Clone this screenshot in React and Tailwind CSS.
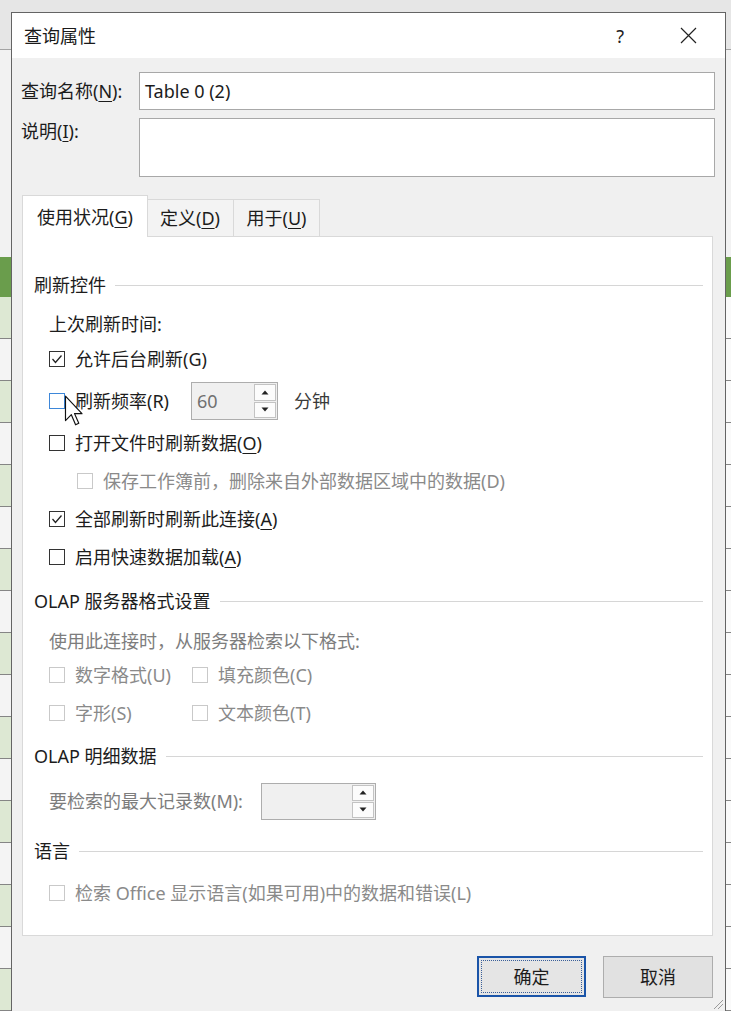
import React from "react";

const FONT = "font-['Noto_Sans','Noto_Sans_CJK_SC',sans-serif]";

// excel sheet peeking out behind the dialog
function SheetStrip({ width, tone }) {
  const rows = Array.from({ length: 17 });
  return (
    <div className={`${width} flex flex-col overflow-hidden`}>
      <div className="h-[52px] bg-[#e6e6e6] border-b border-[#a3a3a3]" />
      <div className="h-[215px] bg-[#f2f2f2]" />
      <div className="h-[42px] bg-[#6a9d4c]" />
      {rows.map((_, i) => (
        <div
          key={i}
          className={`h-[42px] shrink-0 border-b border-[#858585] ${
            tone === "green"
              ? i % 2 === 0
                ? "bg-[#dde8d3]"
                : "bg-[#f4f4f4]"
              : "bg-[#fafafa]"
          }`}
        />
      ))}
    </div>
  );
}

function U({ children }) {
  return <span className="underline underline-offset-[3px] decoration-1">{children}</span>;
}

function Checkbox({ checked, disabled, hover }) {
  const border = disabled
    ? "border-[#c9c9c9]"
    : hover
    ? "border-[#3d87d9]"
    : "border-[#333333]";
  return (
    <div className={`w-[16px] h-[16px] shrink-0 border bg-white ${border} flex items-center justify-center`}>
      {checked && (
        <svg width="14" height="14" viewBox="0 0 14 14">
          <polyline points="2.5,7 5.5,10.5 11.5,3.5" fill="none" stroke="#222" strokeWidth="1.3" />
        </svg>
      )}
    </div>
  );
}

function CheckRow({ mt, checked, disabled, hover, indent, children }) {
  return (
    <div className={`h-[34px] ${mt} ${indent ? "pl-[28px]" : ""} flex items-center`}>
      <Checkbox checked={checked} disabled={disabled} hover={hover} />
      <span className={`ml-[10px] whitespace-nowrap ${disabled ? "text-[#8a8a8a]" : "text-[#1c1c1c]"}`}>
        {children}
      </span>
    </div>
  );
}

function SectionHead({ mt, children }) {
  return (
    <div className={`h-[34px] ${mt} -ml-[15px] flex items-center`}>
      <span className="text-[#1c1c1c] whitespace-nowrap">{children}</span>
      <div className="flex-1 h-px bg-[#d6d6d6] ml-[9px]" />
    </div>
  );
}

function Arrow({ up }) {
  return (
    <svg width="8" height="5" viewBox="0 0 8 5">
      {up ? <polygon points="4,0.5 7.5,4.5 0.5,4.5" fill="#222" /> : <polygon points="0.5,0.5 7.5,0.5 4,4.5" fill="#222" />}
    </svg>
  );
}

function Spinner({ w, h, value }) {
  return (
    <div className={`${w} ${h} border border-[#adadad] bg-[#f0f0f0] flex`}>
      <div className="flex-1 pl-[5px] flex items-center text-[#707070]">{value}</div>
      <div className="w-[23px] py-[1px] pr-[1px] flex flex-col gap-[1px]">
        <div className="flex-1 border border-[#c3c3c3] bg-[#fcfcfc] flex items-center justify-center">
          <Arrow up />
        </div>
        <div className="flex-1 border border-[#c3c3c3] bg-[#fcfcfc] flex items-center justify-center">
          <Arrow />
        </div>
      </div>
    </div>
  );
}

export default function App() {
  return (
    <div className={`relative w-[731px] h-[1011px] overflow-hidden flex bg-[#e6e6e6] text-[18px] leading-none ${FONT}`}>
      <SheetStrip width="w-[11px]" tone="green" />

      <div className="w-[715px] flex flex-col">
        <div className="h-[12px] shrink-0 bg-[#e6e6e6]" />
        <div className="flex-1 flex flex-col border-t border-x border-[#646464] bg-[#f0f0f0]">
          {/* title bar */}
          <div className="h-[45px] bg-white flex items-center pl-[12px] pr-[28px]">
            <span className="text-[#1a1a1a]">查询属性</span>
            <span className="ml-auto text-[#222] mr-[56px]">?</span>
            <svg width="17" height="17" viewBox="0 0 17 17">
              <path d="M1 1 L16 16 M16 1 L1 16" stroke="#222" strokeWidth="1.2" />
            </svg>
          </div>

          <div className="pl-[9px] pr-[10px] pt-[14px] flex flex-col">
            <div className="flex">
              <div className="w-[118px] h-[38px] flex items-center text-[#1c1c1c] whitespace-nowrap">
                查询名称(<U>N</U>):
              </div>
              <div className="flex-1 h-[38px] border border-[#a8a8a8] bg-white pl-[5px] flex items-center text-[#1c1c1c]">
                Table 0 (2)
              </div>
            </div>
            <div className="flex mt-[8px]">
              <div className="w-[118px] h-[26px] flex items-center text-[#1c1c1c]">
                说明(<U>I</U>):
              </div>
              <div className="flex-1 h-[59px] border border-[#a8a8a8] bg-white" />
            </div>

            {/* tabs */}
            <div className="ml-[1px] mr-[2px] mt-[18px] flex flex-col">
              <div className="h-[41px] flex items-end">
                <div className="relative z-10 w-[126px] h-[42px] -mb-px bg-white border-t border-x border-[#d9d9d9] flex items-center justify-center text-[#1c1c1c]">
                  使用状况(<U>G</U>)
                </div>
                <div className="w-[87px] h-[37px] -ml-px bg-[#f3f3f3] border-t border-r border-[#d9d9d9] flex items-center justify-center text-[#1c1c1c]">
                  定义(<U>D</U>)
                </div>
                <div className="w-[86px] h-[37px] bg-[#f3f3f3] border-t border-r border-[#d9d9d9] flex items-center justify-center text-[#1c1c1c]">
                  用于(<U>U</U>)
                </div>
              </div>

              <div className="h-[700px] bg-white border border-[#d9d9d9] pt-[31px] pl-[26px] pr-[9px] flex flex-col">
                <SectionHead mt="">刷新控件</SectionHead>
                <div className="h-[34px] mt-[5px] flex items-center text-[#1c1c1c]">上次刷新时间:</div>
                <CheckRow mt="mt-[1px]" checked>
                  允许后台刷新(G)
                </CheckRow>
                <div className="h-[34px] mt-[8px] flex items-center">
                  <Checkbox hover />
                  <span className="ml-[10px] w-[116px] text-[#1c1c1c] whitespace-nowrap">刷新频率(R)</span>
                  <Spinner w="w-[87px]" h="h-[38px]" value="60" />
                  <span className="ml-[16px] text-[#3a3a3a]">分钟</span>
                </div>
                <CheckRow mt="mt-[8px]">
                  打开文件时刷新数据(<U>O</U>)
                </CheckRow>
                <CheckRow mt="mt-[4px]" disabled indent>
                  保存工作簿前，删除来自外部数据区域中的数据(D)
                </CheckRow>
                <CheckRow mt="mt-[4px]" checked>
                  全部刷新时刷新此连接(<U>A</U>)
                </CheckRow>
                <CheckRow mt="mt-[4px]">
                  启用快速数据加载(<U>A</U>)
                </CheckRow>

                <SectionHead mt="mt-[10px]">OLAP 服务器格式设置</SectionHead>
                <div className="h-[34px] mt-[6px] flex items-center text-[#7d7d7d]">
                  使用此连接时，从服务器检索以下格式:
                </div>
                <div className="flex">
                  <div className="w-[143px]">
                    <CheckRow mt="" disabled>
                      数字格式(U)
                    </CheckRow>
                  </div>
                  <CheckRow mt="" disabled>
                    填充颜色(C)
                  </CheckRow>
                </div>
                <div className="flex mt-[4px]">
                  <div className="w-[143px]">
                    <CheckRow mt="" disabled>
                      字形(S)
                    </CheckRow>
                  </div>
                  <CheckRow mt="" disabled>
                    文本颜色(T)
                  </CheckRow>
                </div>

                <SectionHead mt="mt-[9px]">OLAP 明细数据</SectionHead>
                <div className="h-[34px] mt-[11px] flex items-center">
                  <span className="w-[212px] text-[#7d7d7d] whitespace-nowrap">要检索的最大记录数(M):</span>
                  <Spinner w="w-[115px]" h="h-[37px]" value="" />
                </div>

                <SectionHead mt="mt-[16px]">语言</SectionHead>
                <CheckRow mt="mt-[8px]" disabled>
                  检索 Office 显示语言(如果可用)中的数据和错误(L)
                </CheckRow>
              </div>
            </div>

            {/* buttons */}
            <div className="mt-[20px] pr-[2px] flex justify-end gap-[17px]">
              <div className="w-[109px] h-[41px] border-2 border-[#1a54a8] bg-[#e5e5e5] p-[2px]">
                <div className="w-full h-full border border-dotted border-[#3a5f99] flex items-center justify-center text-[#1c1c1c]">
                  确定
                </div>
              </div>
              <div className="w-[110px] h-[42px] border border-[#adadad] bg-[#e1e1e1] flex items-center justify-center text-[#1c1c1c]">
                取消
              </div>
            </div>
          </div>
        </div>
      </div>

      <SheetStrip width="w-[5px]" tone="white" />

      {/* mouse pointer */}
      <svg className="absolute left-[64px] top-[395px]" width="20" height="33" viewBox="0 0 18 31">
        <path
          d="M1 1 L1 24 L6.5 18.5 L10.5 28 L13.5 26.5 L9.5 17.5 L16.5 17.5 Z"
          fill="#fff"
          stroke="#111"
          strokeWidth="1.1"
          strokeLinejoin="round"
        />
      </svg>

      {/* resize grip */}
      <svg className="absolute left-[712px] top-[998px]" width="12" height="12" viewBox="0 0 12 12">
        <path d="M11 2 L2 11 M11 6 L6 11" stroke="#9a9a9a" strokeWidth="1" />
      </svg>
    </div>
  );
}
